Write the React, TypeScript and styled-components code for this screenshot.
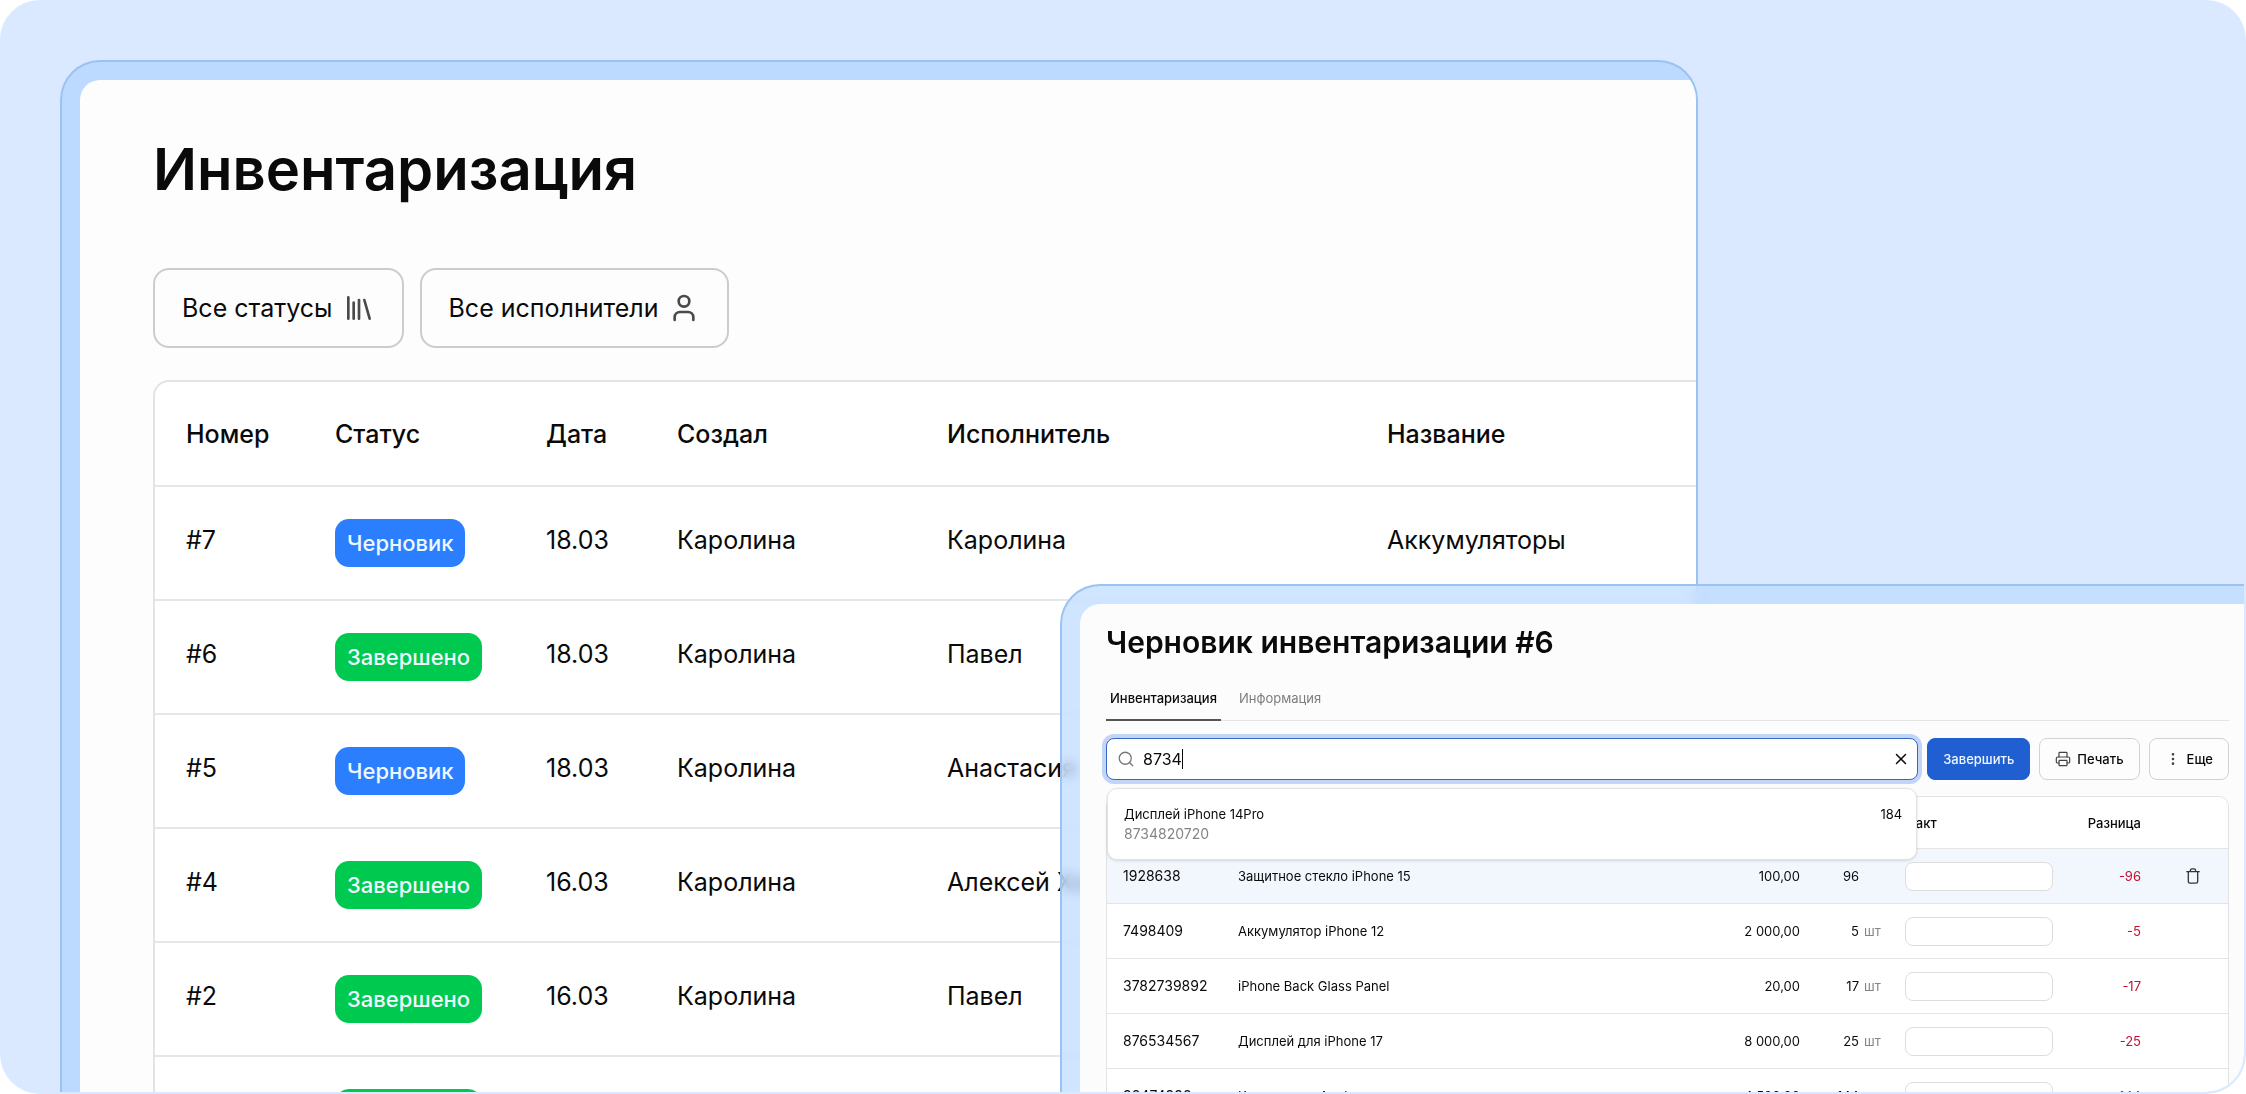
import React from "react";
import styled, { createGlobalStyle } from "styled-components";
import { Library, User, Search, X, Printer, EllipsisVertical } from "lucide-react";

const GlobalStyle = createGlobalStyle`
  *, *::before, *::after { box-sizing: border-box; }
  body { margin: 0; background: #ffffff; }
  #root { font-family: Inter, "Liberation Sans", sans-serif; color: #0a0a0a; }
  button, input { font: inherit; color: inherit; }
`;

const Stage = styled.div`
  display: grid;
  grid-template-columns: 1000fr 1184fr;
  height: 100vh;
  padding: 58px 0 0 58px;
  border: 2px solid #dae9ff;
  border-radius: 40px;
  background: #dae9ff;
  overflow: hidden;
`;

const Frame = styled.section`
  min-height: 0;
  min-width: 0;
  display: flex;
  border: 2px solid #9ac2f2;
  border-bottom: 0;
  background: #bcdaff;
  overflow: hidden;
`;

const ListFrame = styled(Frame)`
  grid-row: 1;
  grid-column: 1 / -1;
  width: 75%;
  padding: 18px 0 0 18px;
  border-radius: 40px 40px 0 0;
`;

const DraftFrame = styled(Frame)`
  grid-row: 1;
  grid-column: 2;
  margin-top: 524px;
  padding: 18px 0 0 18px;
  border-right: 0;
  border-radius: 40px 0 0 0;
  background: rgba(188, 218, 255, 0.7);
  backdrop-filter: blur(6px);
  z-index: 1;
`;

const ListWindow = styled.div`
  flex: 1;
  min-width: 0;
  padding: 56px 0 0 73px;
  border-radius: 20px 0 0 0;
  background: #fdfdfd;
  overflow: hidden;
`;

const ListTitle = styled.h1`
  margin: 0;
  font-size: 58px;
  line-height: 66px;
  font-weight: 600;
`;

const Filters = styled.div`
  display: flex;
  gap: 16px;
  margin: 66px 0 32px;
`;

const FilterButton = styled.button`
  display: flex;
  align-items: center;
  gap: 10px;
  height: 80px;
  padding: 0 27px;
  border: 2px solid #cccccc;
  border-radius: 16px;
  background: #fdfdfd;
  font-size: 25px;
  white-space: nowrap;
  svg { color: #4a4a4a; }
`;

const TableBox = styled.div`
  border: 2px solid #e3e3e3;
  border-right: 0;
  border-radius: 16px 0 0 0;
  background: #ffffff;
  overflow: hidden;
`;

const ListTable = styled.table`
  width: 100%;
  border-collapse: separate;
  border-spacing: 0;
  table-layout: fixed;
  font-size: 25px;
  line-height: 32px;
  th, td {
    padding: 0 0 0 31px;
    text-align: left;
    white-space: nowrap;
    border-bottom: 2px solid #e6e6e6;
  }
  th { height: 105px; font-weight: 500; }
  td { height: 114px; padding-bottom: 6px; }
`;

const BadgeCell = styled.td`
  && { padding-bottom: 0; }
`;

const Badge = styled.span<{ $done: boolean }>`
  display: inline-flex;
  align-items: center;
  height: 48px;
  padding: 0 12px;
  border-radius: 14px;
  background: ${(p) => (p.$done ? "#00c950" : "#2b7fff")};
  color: #eef8ff;
  font-size: 22px;
  font-weight: 500;
  vertical-align: middle;
`;

const DraftWindow = styled.div`
  flex: 1;
  min-width: 0;
  padding: 20px 15px 0 26px;
  border-radius: 20px 0 0 0;
  background: #fcfcfd;
  overflow: hidden;
`;

const DraftTitle = styled.h2`
  margin: 0;
  font-size: 30px;
  line-height: 36px;
  font-weight: 600;
`;

const Tabs = styled.nav`
  display: flex;
  gap: 14px;
  margin: 21px 0 17px;
  border-bottom: 1px solid #e4e4e4;
`;

const Tab = styled.a<{ $active?: boolean }>`
  height: 40px;
  padding: 0 4px;
  margin-bottom: -1px;
  border-bottom: 2px solid ${(p) => (p.$active ? "#555555" : "transparent")};
  color: ${(p) => (p.$active ? "#0a0a0a" : "#7d7d7d")};
  font-size: 13px;
  line-height: 34px;
  font-weight: ${(p) => (p.$active ? 500 : 400)};
  text-decoration: none;
`;

const Toolbar = styled.div`
  display: flex;
  gap: 9px;
  margin-bottom: 16px;
`;

const SearchArea = styled.div`
  position: relative;
  flex: 1;
  min-width: 0;
`;

const SearchBox = styled.label`
  display: flex;
  align-items: center;
  height: 42px;
  padding: 0 7px 0 10px;
  border: 1px solid #3668c4;
  border-radius: 8px;
  background: #ffffff;
  box-shadow: 0 0 0 4px #c3d4f9;
  svg { color: #777777; }
`;

const SearchInput = styled.input`
  field-sizing: content;
  max-width: 80%;
  margin-left: 8px;
  padding: 0;
  border: 0;
  outline: 0;
  background: transparent;
  caret-color: transparent;
  font-size: 16px;
`;

const Caret = styled.span`
  width: 1px;
  height: 20px;
  background: #0a0a0a;
`;

const ClearButton = styled.button`
  display: flex;
  margin-left: auto;
  padding: 0;
  border: 0;
  background: transparent;
  svg { color: #0a0a0a; }
`;

const Suggestions = styled.div`
  position: absolute;
  top: 50px;
  left: 1px;
  right: 1px;
  display: flex;
  justify-content: space-between;
  padding: 15px 14px 15px 16px;
  border: 1px solid #e2e2e2;
  border-radius: 10px;
  background: #ffffff;
  box-shadow: 0 1px 3px rgba(0, 0, 0, 0.12);
  font-size: 13px;
  line-height: 20px;
`;

const SuggestionText = styled.div`
  display: grid;
`;

const SuggestionCode = styled.span`
  color: #858585;
  font-size: 14px;
`;

const ActionButton = styled.button<{ $primary?: boolean }>`
  display: flex;
  align-items: center;
  justify-content: center;
  gap: 6px;
  height: 42px;
  padding: 0 15px;
  border: 1px solid ${(p) => (p.$primary ? "#1f5fd1" : "#d2d2d2")};
  border-radius: 8px;
  background: ${(p) => (p.$primary ? "#1f5fd1" : "#fdfdfd")};
  color: ${(p) => (p.$primary ? "#f0f6ff" : "#0a0a0a")};
  font-size: 13px;
  font-weight: 500;
  white-space: nowrap;
  svg { color: #444444; }
`;

const DraftTableBox = styled.div`
  border: 1px solid #e3e3e3;
  border-radius: 10px 10px 0 0;
  background: #ffffff;
  overflow: hidden;
`;

const DraftTable = styled.table`
  width: 100%;
  table-layout: fixed;
  border-collapse: separate;
  border-spacing: 0;
  font-size: 13px;
  line-height: 18px;
  th, td {
    height: 55px;
    padding: 0 0 0 16px;
    border-bottom: 1px solid #e4e4e4;
    text-align: left;
    white-space: nowrap;
  }
  th { height: 52px; font-weight: 500; }
`;

const DraftRow = styled.tr<{ $hover: boolean }>`
  background: ${(p) => (p.$hover ? "#f2f6fd" : "#ffffff")};
`;

const CodeCell = styled.td`
  font-size: 14px;
`;

const NumberCell = styled.td`
  && { text-align: right; padding: 0; }
`;

const NumberHead = styled.th`
  && { text-align: right; padding: 0; }
`;

const UnitCell = styled.td`
  && { padding: 0 0 0 5px; color: #858585; }
`;

const FactCell = styled.td`
  && { padding: 0; }
`;

const FactHead = styled.th`
  && { padding: 0; }
`;

const DiffCell = styled(NumberCell)`
  color: #c8102e;
`;

const TrashCell = styled.td`
  && { padding: 0 0 0 45px; }
`;

const FactInput = styled.input`
  display: block;
  width: 148px;
  height: 29px;
  padding: 0 8px;
  border: 1px solid #dddddd;
  border-radius: 8px;
  background: #ffffff;
`;

const IconButton = styled.button`
  display: flex;
  padding: 0;
  border: 0;
  background: transparent;
  color: #333333;
`;

const counts = [
  { id: "#7", done: false, date: "18.03", author: "Каролина", assignee: "Каролина", name: "Аккумуляторы" },
  { id: "#6", done: true, date: "18.03", author: "Каролина", assignee: "Павел", name: "" },
  { id: "#5", done: false, date: "18.03", author: "Каролина", assignee: "Анастасия", name: "" },
  { id: "#4", done: true, date: "16.03", author: "Каролина", assignee: "Алексей Ха", name: "" },
  { id: "#2", done: true, date: "16.03", author: "Каролина", assignee: "Павел", name: "" },
  { id: "", done: true, date: "", author: "", assignee: "", name: "" },
];

const goods = [
  { code: "1928638", name: "Защитное стекло iPhone 15", price: "100,00", stock: "96", unit: "", diff: "-96" },
  { code: "7498409", name: "Аккумулятор iPhone 12", price: "2 000,00", stock: "5", unit: "шт", diff: "-5" },
  { code: "3782739892", name: "iPhone Back Glass Panel", price: "20,00", stock: "17", unit: "шт", diff: "-17" },
  { code: "876534567", name: "Дисплей для iPhone 17", price: "8 000,00", stock: "25", unit: "шт", diff: "-25" },
  { code: "98474998", name: "Крышка для Apple", price: "4 500,00", stock: "144", unit: "", diff: "-144" },
];

const TrashIcon = () => (
  <svg width="14" height="16" viewBox="0 0 14 16" fill="none" stroke="currentColor" strokeWidth="1.3" strokeLinecap="round">
    <path d="M0.8 3.7H13.2M2.3 3.7V13.4a1.8 1.8 0 0 0 1.8 1.8h5.8a1.8 1.8 0 0 0 1.8-1.8V3.7M4.4 3.5V2.4A1.6 1.6 0 0 1 6 0.8h2a1.6 1.6 0 0 1 1.6 1.6v1.1" />
  </svg>
);

export default function App() {
  return (
    <>
      <GlobalStyle />
      <Stage>
        <ListFrame>
          <ListWindow>
            <ListTitle>Инвентаризация</ListTitle>
            <Filters>
              <FilterButton type="button">
                Все статусы
                <Library size={32} strokeWidth={2} />
              </FilterButton>
              <FilterButton type="button">
                Все исполнители
                <User size={32} strokeWidth={2} />
              </FilterButton>
            </Filters>
            <TableBox>
              <ListTable>
                <colgroup>
                  <col style={{ width: 149 }} />
                  <col style={{ width: 211 }} />
                  <col style={{ width: 131 }} />
                  <col style={{ width: 270 }} />
                  <col style={{ width: 440 }} />
                  <col />
                </colgroup>
                <thead>
                  <tr>
                    <th>Номер</th>
                    <th>Статус</th>
                    <th>Дата</th>
                    <th>Создал</th>
                    <th>Исполнитель</th>
                    <th>Название</th>
                  </tr>
                </thead>
                <tbody>
                  {counts.map((c, i) => (
                    <tr key={i}>
                      <td>{c.id}</td>
                      <BadgeCell>
                        <Badge $done={c.done}>{c.done ? "Завершено" : "Черновик"}</Badge>
                      </BadgeCell>
                      <td>{c.date}</td>
                      <td>{c.author}</td>
                      <td>{c.assignee}</td>
                      <td>{c.name}</td>
                    </tr>
                  ))}
                </tbody>
              </ListTable>
            </TableBox>
          </ListWindow>
        </ListFrame>

        <DraftFrame>
          <DraftWindow>
            <DraftTitle>Черновик инвентаризации #6</DraftTitle>
            <Tabs>
              <Tab href="#inventory" $active>Инвентаризация</Tab>
              <Tab href="#info">Информация</Tab>
            </Tabs>
            <Toolbar>
              <SearchArea>
                <SearchBox>
                  <Search size={18} strokeWidth={1.7} />
                  <SearchInput aria-label="Поиск" defaultValue="8734" />
                  <Caret />
                  <ClearButton type="button" aria-label="Очистить">
                    <X size={18} strokeWidth={2} />
                  </ClearButton>
                </SearchBox>
                <Suggestions>
                  <SuggestionText>
                    <span>Дисплей iPhone 14Pro</span>
                    <SuggestionCode>8734820720</SuggestionCode>
                  </SuggestionText>
                  <span>184</span>
                </Suggestions>
              </SearchArea>
              <ActionButton type="button" $primary>Завершить</ActionButton>
              <ActionButton type="button">
                <Printer size={16} strokeWidth={1.8} />
                Печать
              </ActionButton>
              <ActionButton type="button">
                <EllipsisVertical size={16} />
                Еще
              </ActionButton>
            </Toolbar>
            <DraftTableBox>
              <DraftTable>
                <colgroup>
                  <col style={{ width: 115 }} />
                  <col />
                  <col style={{ width: 120 }} />
                  <col style={{ width: 59 }} />
                  <col style={{ width: 46 }} />
                  <col style={{ width: 148 }} />
                  <col style={{ width: 88 }} />
                  <col style={{ width: 87 }} />
                </colgroup>
                <thead>
                  <tr>
                    <th />
                    <th />
                    <th />
                    <th />
                    <th />
                    <FactHead>Факт</FactHead>
                    <NumberHead>Разница</NumberHead>
                    <th />
                  </tr>
                </thead>
                <tbody>
                  {goods.map((g, i) => (
                    <DraftRow key={g.code} $hover={i === 0}>
                      <CodeCell>{g.code}</CodeCell>
                      <td>{g.name}</td>
                      <NumberCell>{g.price}</NumberCell>
                      <NumberCell>{g.stock}</NumberCell>
                      <UnitCell>{g.unit}</UnitCell>
                      <FactCell>
                        <FactInput aria-label={"Факт " + g.code} />
                      </FactCell>
                      <DiffCell>{g.diff}</DiffCell>
                      <TrashCell>
                        {i === 0 && (
                          <IconButton type="button" aria-label="Удалить">
                            <TrashIcon />
                          </IconButton>
                        )}
                      </TrashCell>
                    </DraftRow>
                  ))}
                </tbody>
              </DraftTable>
            </DraftTableBox>
          </DraftWindow>
        </DraftFrame>
      </Stage>
    </>
  );
}
